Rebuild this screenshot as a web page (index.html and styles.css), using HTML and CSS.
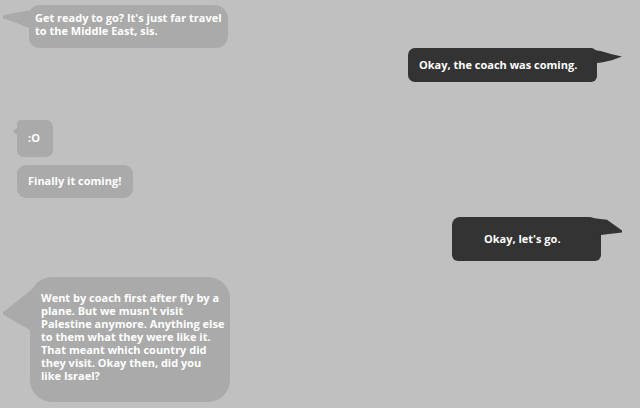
FILE: index.html
```html
<!DOCTYPE html>
<html>
<head>
<meta charset="utf-8">
<link rel="stylesheet" href="styles.css">
</head>
<body>
<div class="chat">
  <div class="msg in m1">Get ready to go? It's just far travel to the Middle East, sis.</div>
  <div class="msg out m2">Okay, the coach was coming.</div>
  <div class="msg in m3">:O</div>
  <div class="msg in m4">Finally it coming!</div>
  <div class="msg out m5">Okay, let's go.</div>
  <div class="msg in m6">Went by coach first after fly by a plane. But we musn't visit Palestine anymore. Anything else to them what they were like it. That meant which country did they visit. Okay then, did you like&nbsp;Israel?</div>
</div>
</body>
</html>
```
FILE: styles.css
```css
html, body {
  margin: 0;
  padding: 0;
  background: #c0c0c0;
  height: 408px;
  overflow: hidden;
}
.chat {
  display: flex;
  flex-direction: column;
  padding-top: 5px;
  font-family: "Open Sans", "Noto Sans", sans-serif;
  font-weight: 700;
  font-size: 11px;
  line-height: 13px;
  color: #ffffff;
}
.msg {
  position: relative;
  box-sizing: border-box;
}
.msg::before {
  content: "";
  position: absolute;
}
.in {
  align-self: flex-start;
  background: #aaaaaa;
}
.in::before { background: #aaaaaa; }
.out {
  align-self: flex-end;
  background: #333333;
}
.out::before { background: #333333; }

.m1 {
  margin-left: 29px;
  width: 199px;
  height: 43px;
  padding: 6px 2px 0 6px;
  border-radius: 10px 14px 12px 10px;
}
.m1::before {
  left: -26px;
  top: 5px;
  width: 28px;
  height: 19px;
  clip-path: polygon(100% 0, 30% 18%, 0 28%, 0 45%, 30% 58%, 100% 100%);
}
.m2 {
  margin-right: 43px;
  width: 189px;
  height: 34px;
  padding: 10px 0 0 11px;
  border-radius: 7px 6px 6px 7px;
}
.m2::before {
  left: 180px;
  top: 1px;
  width: 34px;
  height: 15px;
  clip-path: polygon(0 0, 40% 15%, 70% 35%, 100% 50%, 70% 75%, 40% 90%, 0 100%);
}
.m3 {
  margin-top: 38px;
  margin-left: 17px;
  width: 36px;
  height: 37px;
  padding: 11px 0 0 11px;
  border-radius: 7px;
  border-top-left-radius: 4px;
}
.m3::before {
  left: -4px;
  top: 6px;
  width: 6px;
  height: 10px;
  clip-path: polygon(100% 0, 30% 40%, 0 60%, 100% 100%);
}
.m4 {
  margin-top: 8px;
  margin-left: 17px;
  width: 116px;
  height: 33px;
  padding: 9px 0 0 11px;
  border-radius: 9px;
}
.m4::before { display: none; }
.m5 {
  margin-top: 19px;
  margin-right: 39px;
  width: 149px;
  height: 44px;
  padding: 15px 0 0 32px;
  border-radius: 8px 12px 6px 6px;
}
.m5::before {
  left: 140px;
  top: 1px;
  width: 30px;
  height: 18px;
  clip-path: polygon(0 0, 50% 10%, 100% 70%, 100% 80%, 0 100%);
}
.m6 {
  margin-top: 16px;
  margin-left: 30px;
  width: 200px;
  height: 125px;
  padding: 14px 4px 0 11px;
  border-radius: 22px;
}
.m6::before {
  left: -27px;
  top: 10px;
  width: 32px;
  height: 46px;
  clip-path: polygon(100% 0, 0 55%, 0 60%, 100% 100%);
}
```
